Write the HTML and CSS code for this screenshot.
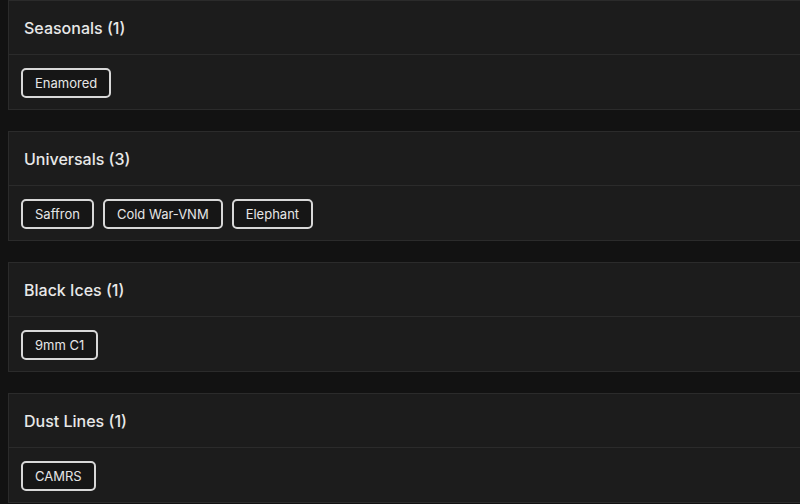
FILE: index.html
```html
<!DOCTYPE html>
<html>
<head>
<meta charset="utf-8">
<link rel="stylesheet" href="styles.css">
</head>
<body>
<div class="list">
  <section class="card">
    <div class="card-head">Seasonals (1)</div>
    <div class="card-body">
      <span class="chip">Enamored</span>
    </div>
  </section>
  <section class="card">
    <div class="card-head">Universals (3)</div>
    <div class="card-body">
      <span class="chip">Saffron</span>
      <span class="chip">Cold War-VNM</span>
      <span class="chip">Elephant</span>
    </div>
  </section>
  <section class="card">
    <div class="card-head">Black Ices (1)</div>
    <div class="card-body">
      <span class="chip">9mm C1</span>
    </div>
  </section>
  <section class="card">
    <div class="card-head">Dust Lines (1)</div>
    <div class="card-body">
      <span class="chip">CAMRS</span>
    </div>
  </section>
</div>
</body>
</html>
```
FILE: styles.css
```css
html, body {
  margin: 0;
  padding: 0;
  background: #121212;
  overflow: hidden;
  height: 504px;
}
body {
  font-family: "Inter", "DejaVu Sans", sans-serif;
  color: #e6e6e6;
}
.list {
  display: flex;
  flex-direction: column;
  gap: 21px;
  padding: 0 0 0 8px;
}
.card {
  width: 820px;
  background: #1c1c1c;
  border: 1px solid #2b2b2b;
  box-sizing: border-box;
}
.card-head {
  height: 53px;
  display: flex;
  align-items: center;
  padding: 0 15px;
  font-size: 16px;
  font-weight: 500;
  color: #e8e8e8;
  border-bottom: 1px solid #2b2b2b;
}
.card-body {
  display: flex;
  gap: 9px;
  padding: 13px 12px 11px;
}
.chip {
  display: inline-flex;
  align-items: center;
  height: 30px;
  box-sizing: border-box;
  padding: 0 12px;
  border: 2px solid #d8d8d8;
  border-radius: 5px;
  font-size: 13px;
  color: #e6e6e6;
  background: #161616;
}
```
